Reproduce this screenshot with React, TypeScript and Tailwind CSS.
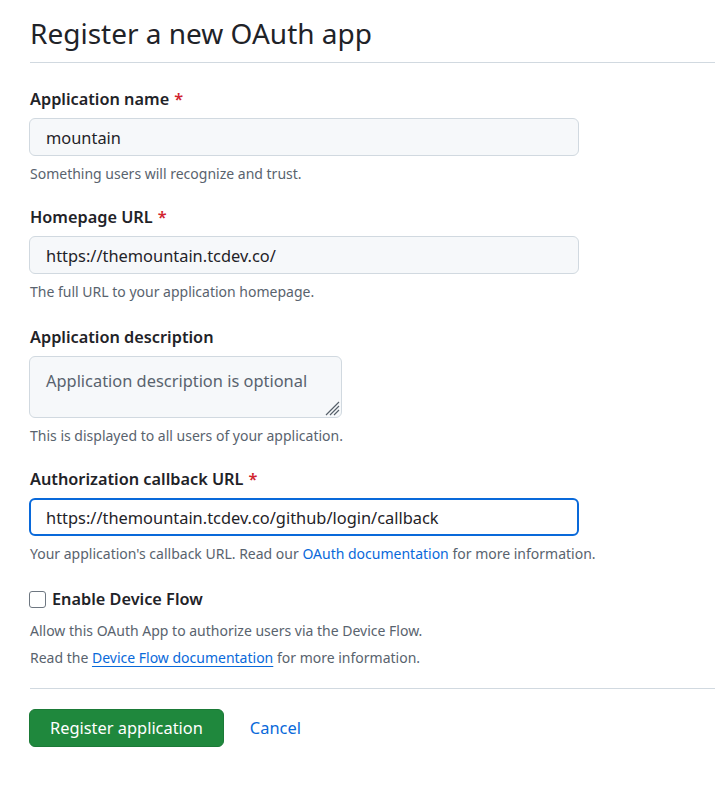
const FONT = { fontFamily: '"Segoe UI", "Noto Sans", "Liberation Sans", sans-serif' }

function Label({ text, required }: { text: string; required?: boolean }) {
  return (
    <div className="h-[24px] flex items-center text-[16.3px] font-semibold text-[#1f2328] leading-[24px]">
      {text}
      {required && <span className="ml-[5px] text-[#d1242f]">*</span>}
    </div>
  )
}

function Hint({ children }: { children: React.ReactNode }) {
  return <p className="mt-[8px] h-[20px] leading-[20px] text-[14px] text-[#59636e] whitespace-nowrap">{children}</p>
}

const inputCls =
  'mt-[7px] -ml-[1px] block w-[550px] h-[38px] px-[16px] rounded-[6px] border border-[#d1d9e0] bg-[#f6f8fa] text-[16.4px] text-[#1f2328] outline-none'

export default function App() {
  return (
    <div className="bg-white min-h-[785px] pl-[30px] text-[#1f2328]" style={FONT}>
      {/* header */}
      <div className="pt-[14px] pb-[10px] border-b border-[#d1d9e0]">
        <h1 className="text-[28px] leading-[38px] font-normal">Register a new OAuth app</h1>
      </div>

      <div>
        <div className="mt-[24px]">
          <Label text="Application name" required />
          <input readOnly value="mountain" className={inputCls} />
          <Hint>Something users will recognize and trust.</Hint>
        </div>

        <div className="mt-[21px]">
          <Label text="Homepage URL" required />
          <input readOnly value="https://themountain.tcdev.co/" className={inputCls} />
          <Hint>The full URL to your application homepage.</Hint>
        </div>

        <div className="mt-[23px]">
          <Label text="Application description" />
          <div className="relative mt-[7px] -ml-[1px] w-[313px] h-[62px] rounded-[6px] border border-[#d1d9e0] bg-[#f6f8fa] px-[16px] pt-[12px] text-[16.4px] text-[#59636e] leading-[24px]">
            Application description is optional
            {/* resize grip */}
            <svg className="absolute right-[1px] bottom-[1px]" width="16" height="16" viewBox="0 0 16 16">
              <path d="M15 2 L2 15 M15 6 L6 15 M15 10 L10 15" stroke="#57606a" strokeWidth="1.2" fill="none" />
            </svg>
          </div>
          <Hint>This is displayed to all users of your application.</Hint>
        </div>

        <div className="mt-[21px]">
          <Label text="Authorization callback URL" required />
          <input
            readOnly
            value="https://themountain.tcdev.co/github/login/callback"
            className="mt-[7px] -ml-[1px] block w-[550px] h-[38px] px-[15px] rounded-[6px] border-2 border-[#0969da] bg-white text-[16.4px] text-[#1f2328] outline-none"
          />
          <Hint>
            Your application&apos;s callback URL. Read our{' '}
            <span className="text-[#0969da]">OAuth documentation</span> for more information.
          </Hint>
        </div>

        <div className="mt-[23px]">
          <label className="flex items-center h-[24px] gap-[6px]">
            <span className="-ml-[1px] w-[17px] h-[17px] rounded-[3px] border border-[#6e7781] bg-white" />
            <span className="text-[16.3px] font-semibold">Enable Device Flow</span>
          </label>
          <p className="mt-[10px] text-[14px] leading-[20px] text-[#59636e]">
            Allow this OAuth App to authorize users via the Device Flow.
          </p>
          <p className="mt-[7px] text-[14px] leading-[20px] text-[#59636e]">
            Read the{' '}
            <span className="text-[#0969da] underline underline-offset-[3px]">Device Flow documentation</span> for more
            information.
          </p>
        </div>
      </div>

      <div className="mt-[20px] border-t border-[#d1d9e0]" />

      <div className="mt-[20px] flex items-center gap-[26px]">
        <button className="-ml-[1px] h-[38px] px-[20px] rounded-[6px] bg-[#1f883d] text-white text-[16.4px] border border-[#1b7a37]">
          Register application
        </button>
        <span className="text-[16.4px] text-[#0969da]">Cancel</span>
      </div>
    </div>
  )
}
